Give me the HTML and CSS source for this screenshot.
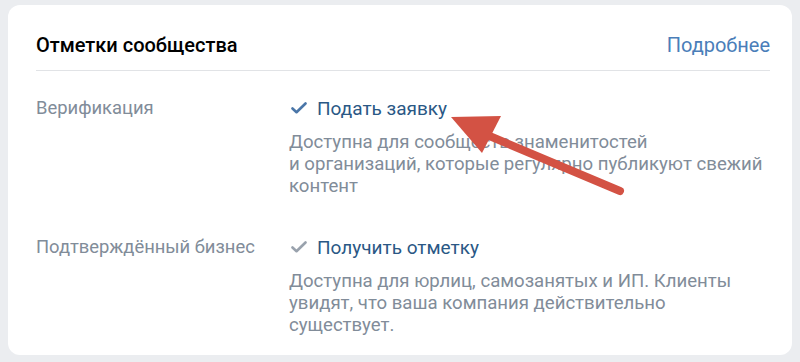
FILE: index.html
```html
<!DOCTYPE html>
<html lang="ru">
<head>
<meta charset="utf-8">
<link rel="stylesheet" href="styles.css">
</head>
<body>
<div class="card">
  <div class="head">
    <div class="title">Отметки сообщества</div>
    <a class="more">Подробнее</a>
  </div>
  <div class="sep"></div>
  <div class="row first">
    <div class="label">Верификация</div>
    <div class="value">
      <div class="action">
        <svg class="check" width="16" height="12" viewBox="0 0 16 12"><path d="M1.5 6.5 L5.5 10.2 L14.5 1.5" fill="none" stroke="#4a76a8" stroke-width="2.6" stroke-linecap="round" stroke-linejoin="round"/></svg>
        <span>Подать заявку</span>
      </div>
      <div class="desc">Доступна для сообществ знаменитостей и&nbsp;организаций, которые регулярно публикуют свежий контент</div>
    </div>
  </div>
  <div class="row second">
    <div class="label">Подтверждённый бизнес</div>
    <div class="value">
      <div class="action">
        <svg class="check" width="16" height="12" viewBox="0 0 16 12"><path d="M1.5 6.5 L5.5 10.2 L14.5 1.5" fill="none" stroke="#99a2ad" stroke-width="2.6" stroke-linecap="round" stroke-linejoin="round"/></svg>
        <span>Получить отметку</span>
      </div>
      <div class="desc">Доступна для юрлиц, самозанятых и&nbsp;ИП. Клиенты увидят, что ваша компания действительно существует.</div>
    </div>
  </div>
</div>
<svg class="arrow" width="800" height="362" viewBox="0 0 800 362">
  <line x1="620" y1="191" x2="480" y2="132" stroke="#d35244" stroke-width="8" stroke-linecap="round"/>
  <polygon points="451,117 501,116 482,153" fill="#d35244"/>
</svg>
</body>
</html>
```
FILE: styles.css
```css
html, body { margin: 0; padding: 0; }
body {
  background: #ebedf0;
  padding: 5px 8px 0 8px;
  font-family: Roboto, "Liberation Sans", sans-serif;
  position: relative;
  height: 357px;
}
.card {
  background: #fff;
  border-radius: 12px;
  width: 784px;
  box-sizing: border-box;
  padding: 28px 22px 20px 28px;
  height: 350px;
}
.head {
  display: flex;
  justify-content: space-between;
  align-items: center;
  height: 24px;
}
.title {
  font-size: 20px;
  font-weight: 500;
  color: #000;
}
.more {
  font-size: 20px;
  color: #4a7eb9;
}
.sep {
  height: 1px;
  background: #e1e3e6;
  margin-top: 13px;
}
.row {
  display: flex;
}
.row.first { margin-top: 26px; }
.row.second { margin-top: 39px; }
.label {
  width: 253px;
  flex: none;
  font-size: 18.4px;
  line-height: 22px;
  color: #818c99;
}
.value { flex: 1; }
.action {
  display: flex;
  align-items: center;
  height: 22px;
  font-size: 19px;
  color: #2a5885;
}
.check { margin-left: 2px; margin-right: 10px; }
.desc {
  margin-top: 12px;
  font-size: 18.6px;
  line-height: 22px;
  color: #818c99;
}
.arrow {
  position: absolute;
  left: 0;
  top: 0;
}
```
